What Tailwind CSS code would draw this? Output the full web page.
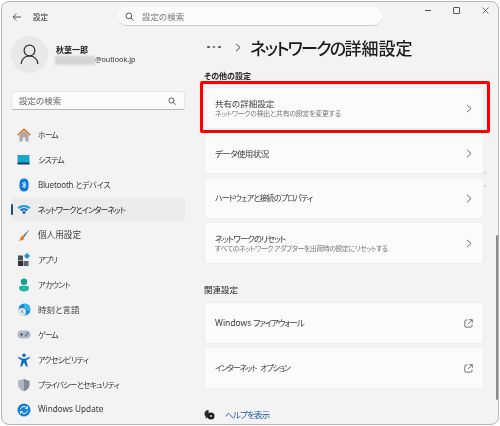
<!DOCTYPE html>
<html lang="ja"><head><meta charset="utf-8"><script src="https://cdn.jsdelivr.net/npm/@tailwindcss/browser@4"></script></head>
<body class="bg-white">
<div class="w-[500px] h-[426px] overflow-hidden bg-white font-['Noto_Sans_CJK_JP','Noto_Sans',sans-serif] [font-feature-settings:'palt'] text-[#2b2b2b] blur-[0.3px]">
<div class="relative w-[498px] h-[424px] ml-px mt-px rounded-lg border border-[#b5b5b5] bg-[#f3f3f3] flex flex-col overflow-hidden">
  <!-- title bar -->
  <div class="h-[29px] shrink-0 flex items-center">
    <svg class="ml-[10px] w-[10px] h-[10px]" viewBox="0 0 10 10" fill="none" stroke="#444" stroke-width="0.9"><path d="M9 5H1M4.500 1.500 1 5l3.500 3.500"/></svg>
    <span class="ml-[11px] w-[85px] text-[7.500px] leading-none">設定</span>
    <div class="w-[264px] h-[19px] rounded-[9px] bg-[#fbfbfb] border-b border-[#c9c9c9] flex items-center pl-[7px]">
      <svg class="w-[9px] h-[9px]" viewBox="0 0 10 10" fill="none" stroke="#444" stroke-width="1"><circle cx="4.300" cy="4.300" r="3.200"/><path d="m6.700 6.700 2.800 2.800"/></svg>
      <span class="ml-[8px] text-[8.500px] leading-none text-[#777]">設定の検索</span>
    </div>
    <div class="ml-auto self-start mt-[5px] h-[7px] flex items-center">
      <span class="w-[6px] h-px bg-[#555] mr-[22px]"></span>
      <span class="w-[7px] h-[7px] border border-[#555] rounded-[1px] mr-[22px]"></span>
      <svg class="w-[7px] h-[7px] mr-[9px]" viewBox="0 0 7 7" stroke="#555" stroke-width="0.8"><path d="m.5.500 6 6M6.500.500l-6 6"/></svg>
    </div>
  </div>
  <div class="flex flex-1 min-h-0">
    <!-- sidebar -->
    <aside class="w-[188px] shrink-0 pl-[9px]">
      <div class="flex items-center h-[37px] mt-[5px]">
        <div class="w-[37px] h-[37px] rounded-full bg-[#e8e8e8] flex items-center justify-center">
          <svg class="w-[19px] h-[21px]" viewBox="0 0 19 21" fill="none" stroke="#2e2e2e" stroke-width="1.200"><circle cx="9.500" cy="6.500" r="5.400"/><path d="M1.200 20c0-4.500 3.300-8 8.300-8s8.300 3.500 8.300 8"/></svg>
        </div>
        <div class="ml-[8px] flex flex-col">
          <span class="text-[8px] leading-[11px] font-bold text-[#222]">秋葉一郎</span>
          <div class="flex items-center h-[11px] -ml-px"><span class="w-[40px] h-[9px] bg-[#d4d4d4] blur-[1px]"></span><span class="text-[7.200px] leading-none font-['Noto_Sans',sans-serif] text-[#333]">@outlook.jp</span></div>
        </div>
      </div>
      <div class="mt-[18px] w-[174px] h-[19px] rounded-[3px] bg-[#fbfbfb] border border-[#e5e5e5] border-b-[#b8b8b8] flex items-center px-[7px]">
        <span class="text-[8.500px] leading-none text-[#666]">設定の検索</span>
        <svg class="ml-auto mr-[1px] w-[8px] h-[8px]" viewBox="0 0 10 10" fill="none" stroke="#444" stroke-width="1.100"><circle cx="4.300" cy="4.300" r="3.200"/><path d="m6.700 6.700 2.800 2.800"/></svg>
      </div>
      <nav class="mt-[13px] w-[174px] flex flex-col gap-[2px] text-[8px] leading-none text-[#3a3a3a]">
        <a class="h-[23px] flex items-center pl-[6px]">
          <svg class="w-[14px] h-[14px] mr-[7px]" viewBox="0 0 14 14"><path d="M2.500 7 7 3l4.500 4v6.500h-3V9.500h-3v4h-3z" fill="#a8a8a8"/><path d="M.7 7.300 7 1.200l6.300 6.100" fill="none" stroke="#d9691e" stroke-width="1.500"/></svg>
          <span class="tracking-[-1px]">ホーム</span></a>
        <a class="h-[23px] flex items-center pl-[6px]">
          <svg class="w-[13px] h-[10px] mr-[8px]" viewBox="0 0 13 10"><rect width="12" height="9" x=".5" rx=".6" fill="#1ba6cf"/><rect width="12" height="2" x=".5" y="7.500" rx=".5" fill="#13425f"/></svg>
          <span class="tracking-[-0.75px]">システム</span></a>
        <a class="h-[23px] flex items-center pl-[6px]">
          <svg class="w-[14px] h-[14px] mr-[7px]" viewBox="0 0 14 14"><rect x="2.500" y=".5" width="9" height="13" rx="4.500" fill="#0b78e3"/><path d="m5 4.800 4 3.400L7 10V3.800l2 1.900-4 3.500" fill="none" stroke="#fff" stroke-width=".8"/></svg>
          <span class="font-['Noto_Sans','Noto_Sans_CJK_JP',sans-serif] tracking-[-0.2px]">Bluetooth とデバイス</span></a>
        <a class="relative h-[23px] flex items-center pl-[6px] rounded-[3px] bg-[#ebebeb] text-[#222]">
          <span class="absolute left-0 top-[6px] w-[2px] h-[11px] rounded bg-[#0f548c]"></span>
          <svg class="w-[14px] h-[11px] mr-[7px]" viewBox="0 0 14 11"><path d="M.5 3.500C4 .2 10 .2 13.500 3.500L12 5C9 2.500 5 2.500 2 5z" fill="#1aa0e8"/><path d="M2.800 5.600C5 3.800 9 3.800 11.200 5.600L9.700 7.100C8 6 6 6 4.300 7.100z" fill="#0d74c4"/><path d="M4.900 7.700C6 7 8 7 9.100 7.700L7 10.300z" fill="#0a4f8e"/></svg>
          <span class="tracking-[-0.8px]">ネットワークとインターネット</span></a>
        <a class="h-[23px] flex items-center pl-[6px]">
          <svg class="w-[14px] h-[14px] mr-[7px]" viewBox="0 0 14 14"><path d="M13 1 6 7.500l1.300 1.400z" fill="#5d6f85"/><path d="M5.700 7.700c-1.800.2-2 1.300-2.300 2.500-.2.900-.7 1.700-1.700 2.300 2.700.6 6-.4 5.400-3.400z" fill="#ee7a1e"/></svg>
          <span class="text-[8.600px]">個人用設定</span></a>
        <a class="h-[23px] flex items-center pl-[6px]">
          <svg class="w-[14px] h-[13px] mr-[7px]" viewBox="0 0 14 13"><rect x="1" y="2.500" width="5" height="5" fill="#47505c"/><rect x="1" y="8" width="5" height="5" fill="#2b323b"/><rect x="6.500" y="8" width="5" height="5" fill="#5b6570"/><path d="m10 0 3 3-3 3-3-3z" fill="#1b8ee6"/></svg>
          <span class="tracking-[-0.7px]">アプリ</span></a>
        <a class="h-[23px] flex items-center pl-[6px]">
          <svg class="w-[14px] h-[14px] mr-[7px]" viewBox="0 0 14 14"><circle cx="7" cy="3.800" r="3.200" fill="#1c9c8c"/><path d="M2 10c0-1.500 1-2.300 2.500-2.300h5C11 7.700 12 8.500 12 10c0 2.500-2.500 3.500-5 3.500S2 12.500 2 10z" fill="#28b6a4"/></svg>
          <span class="tracking-[-0.6px]">アカウント</span></a>
        <a class="h-[23px] flex items-center pl-[6px]">
          <svg class="w-[14px] h-[14px] mr-[7px]" viewBox="0 0 14 14"><circle cx="7.500" cy="6.500" r="6" fill="#1587d6"/><path d="M7 1c3 0 6 2 6 5s-2 2-3 1-2-1-3-2z" fill="#35b6e8"/><circle cx="5" cy="9" r="4" fill="#dfe3e8"/><path d="M5 7v2.200l1.300.8" fill="none" stroke="#555" stroke-width=".7"/></svg>
          <span class="text-[8.500px]">時刻と言語</span></a>
        <a class="h-[23px] flex items-center pl-[6px]">
          <svg class="w-[14px] h-[9px] mr-[7px]" viewBox="0 0 14 9"><rect width="13" height="8" x=".5" y=".5" rx="4" fill="#b4bac2"/><path d="M3 4.500h3M4.500 3v3" stroke="#3c4652" stroke-width=".8"/><circle cx="9" cy="5.500" r=".9" fill="#1d78c8"/><circle cx="10.500" cy="3.500" r=".9" fill="#1d78c8"/></svg>
          <span class="tracking-[-1px]">ゲーム</span></a>
        <a class="h-[23px] flex items-center pl-[6px]">
          <svg class="w-[14px] h-[14px] mr-[7px]" viewBox="0 0 14 14"><circle cx="7" cy="2.300" r="1.800" fill="#0b6fc4"/><path d="M1.500 3.800 5 5.500h4l3.500-1.700.5 1.300L9.300 7.200l1.500 6.300-1.500.3L7 9.500l-2.300 4.300-1.500-.3 1.500-6.300L1 5.100z" fill="#0b6fc4"/></svg>
          <span class="tracking-[-0.75px]">アクセシビリティ</span></a>
        <a class="h-[23px] flex items-center pl-[6px]">
          <svg class="w-[14px] h-[14px] mr-[7px]" viewBox="0 0 14 14"><path d="M7 .7c1.800 1.300 3.500 1.800 5.500 1.800v4.500c0 3-2.300 5.200-5.500 6.300C3.800 12.200 1.500 10 1.500 7V2.500C3.500 2.500 5.200 2 7 .7z" fill="#7f8a96"/><path d="M7 .7v12.600C3.800 12.200 1.500 10 1.500 7V2.500C3.500 2.500 5.200 2 7 .7z" fill="#aeb6bf"/></svg>
          <span class="tracking-[-0.9px]">プライバシーとセキュリティ</span></a>
        <a class="h-[23px] flex items-center pl-[6px]">
          <svg class="w-[14px] h-[14px] mr-[7px]" viewBox="0 0 14 14"><circle cx="7" cy="7" r="6.500" fill="#0f7fdc"/><path d="M3.500 6.300C4 4.500 5.400 3.500 7 3.500c1.200 0 2.200.5 2.900 1.400M10.500 7.700C10 9.500 8.600 10.500 7 10.500c-1.200 0-2.200-.5-2.900-1.400" fill="none" stroke="#fff" stroke-width="1"/><path d="M10.500 3.300v2.300H8.200M3.500 10.700V8.400h2.300" fill="none" stroke="#fff" stroke-width=".9"/></svg>
          <span class="font-['Noto_Sans',sans-serif] text-[8.200px]">Windows Update</span></a>
      </nav>
    </aside>
    <!-- main -->
    <main class="relative flex-1 min-w-0 pl-[14px]">
      <div class="flex items-center h-[24px] mt-[4px]">
        <span class="flex gap-[3px] ml-[3px]"><i class="w-[2.500px] h-[2.500px] rounded-full bg-[#555]"></i><i class="w-[2.500px] h-[2.500px] rounded-full bg-[#555]"></i><i class="w-[2.500px] h-[2.500px] rounded-full bg-[#555]"></i></span>
        <svg class="ml-[14.500px] w-[6px] h-[9px]" viewBox="0 0 6 9" fill="none" stroke="#444" stroke-width="1"><path d="m1 .8 4 3.700-4 3.700"/></svg>
        <h1 class="ml-[9px] text-[17px] leading-none font-medium text-[#1c1c1c]"><span class="tracking-[-1.700px]">ネットワークの</span>詳細設定</h1>
      </div>
      <h2 class="mt-[11px] text-[8px] leading-[11px] font-bold text-[#222]">その他の設定</h2>
      <div class="mt-[6px] w-[280px] flex flex-col gap-[3px] text-[8.500px] leading-none text-[#3a3a3a]">
        <div class="relative h-[42px] rounded-[3px] bg-[#fbfbfb] border border-[#eeeeee] flex items-center px-[10px]">
          <div class="flex flex-col gap-[3px]"><span>共有の詳細設定</span><span class="text-[7px] text-[#777] tracking-[-0.3px]">ネットワークの検出と共有の設定を変更する</span></div>
          <svg class="ml-auto mr-[1px] w-[6px] h-[9px]" viewBox="0 0 6 9" fill="none" stroke="#555" stroke-width=".9"><path d="m1 .8 4 3.700-4 3.700"/></svg>
          <span class="absolute -left-[5px] -right-[7px] -top-[7px] -bottom-[5px] border-[3px] border-[#ff0000] rounded-[2px]"></span>
        </div>
        <div class="h-[42px] rounded-[3px] bg-[#fbfbfb] border border-[#eeeeee] flex items-center px-[10px]">
          <span class="tracking-[-0.6px]">データ使用状況</span>
          <svg class="ml-auto mr-[1px] w-[6px] h-[9px]" viewBox="0 0 6 9" fill="none" stroke="#555" stroke-width=".9"><path d="m1 .8 4 3.700-4 3.700"/></svg>
        </div>
        <div class="h-[42px] rounded-[3px] bg-[#fbfbfb] border border-[#eeeeee] flex items-center px-[10px]">
          <span class="text-[8px] tracking-[-0.8px]">ハードウェアと接続のプロパティ</span>
          <svg class="ml-auto mr-[1px] w-[6px] h-[9px]" viewBox="0 0 6 9" fill="none" stroke="#555" stroke-width=".9"><path d="m1 .8 4 3.700-4 3.700"/></svg>
        </div>
        <div class="h-[42px] rounded-[3px] bg-[#fbfbfb] border border-[#eeeeee] flex items-center px-[10px]">
          <div class="flex flex-col gap-[3px]"><span class="tracking-[-1px]">ネットワークのリセット</span><span class="text-[7px] text-[#777] tracking-[-0.5px]">すべてのネットワーク アダプターを出荷時の設定にリセットする</span></div>
          <svg class="ml-auto mr-[1px] w-[6px] h-[9px]" viewBox="0 0 6 9" fill="none" stroke="#555" stroke-width=".9"><path d="m1 .8 4 3.700-4 3.700"/></svg>
        </div>
      </div>
      <h2 class="mt-[20px] text-[8.500px] leading-[11px] text-[#222]">関連設定</h2>
      <div class="mt-[7px] w-[280px] flex flex-col gap-[3px] text-[8.500px] leading-none text-[#3a3a3a]">
        <div class="h-[42px] rounded-[3px] bg-[#fbfbfb] border border-[#eeeeee] flex items-center px-[10px]">
          <span><span class="font-['Noto_Sans',sans-serif]">Windows</span> <span class="tracking-[-1.200px]">ファイアウォール</span></span>
          <svg class="ml-auto w-[9px] h-[9px]" viewBox="0 0 9 9" fill="none" stroke="#555" stroke-width=".8"><path d="M3.500 1H2a1.200 1.200 0 0 0-1.200 1.200V7A1.200 1.200 0 0 0 2 8.200h4.800A1.200 1.200 0 0 0 8 7V5.500M5 .7h3.300V4M8.200.8 4 5"/></svg>
        </div>
        <div class="h-[42px] rounded-[3px] bg-[#fbfbfb] border border-[#eeeeee] flex items-center px-[10px]">
          <span class="text-[8px] tracking-[-1.100px] [word-spacing:3px]">インターネット オプション</span>
          <svg class="ml-auto w-[9px] h-[9px]" viewBox="0 0 9 9" fill="none" stroke="#555" stroke-width=".8"><path d="M3.500 1H2a1.200 1.200 0 0 0-1.200 1.200V7A1.200 1.200 0 0 0 2 8.200h4.800A1.200 1.200 0 0 0 8 7V5.500M5 .7h3.300V4M8.200.8 4 5"/></svg>
        </div>
      </div>
      <div class="mt-[20px] flex items-center">
        <svg class="w-[11px] h-[11px]" viewBox="0 0 11 11"><path d="M4.500 1C2 1 .5 2.800.5 4.800c0 1.200.5 2.200 1.300 3l-.3 1.700 2-1 1.500.2z" fill="#2b2b2b"/><circle cx="7" cy="7" r="3.500" fill="#1f1f1f"/><circle cx="7" cy="7" r="1" fill="#ddd"/></svg>
        <span class="ml-[10px] text-[8.500px] leading-none tracking-[-0.8px] text-[#1f5aa8]">ヘルプを表示</span>
      </div>
      <span class="absolute right-[0.500px] top-[204px] w-[2px] h-[165px] rounded bg-[#8c8c8c]"></span>
      <span class="absolute left-[294px] top-[141px] w-[2px] h-[2px] rounded-full bg-[#f0b8b8]"></span>
      <span class="absolute left-[294px] top-[154px] w-[2px] h-[2px] rounded-full bg-[#f0b8b8]"></span>
    </main>
  </div>
</div>
</div>
</body></html>
